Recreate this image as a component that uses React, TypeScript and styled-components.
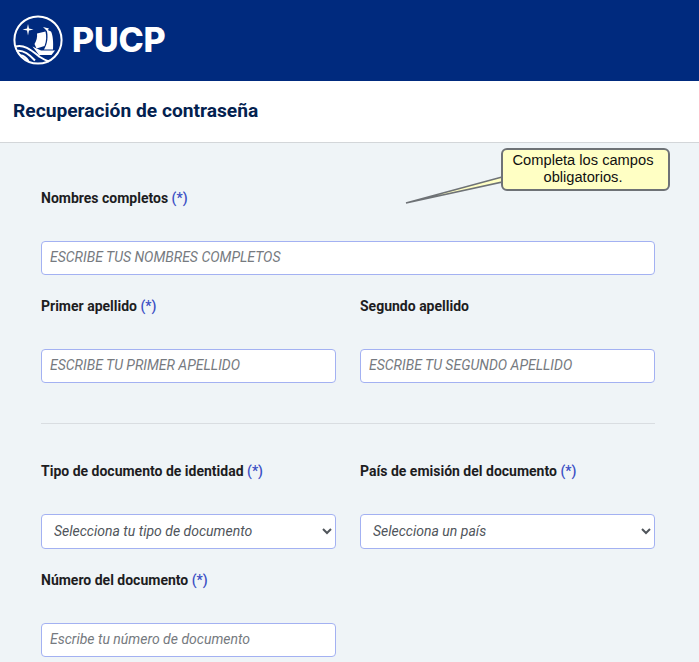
import React from 'react';
import styled, { createGlobalStyle } from 'styled-components';

const GlobalStyle = createGlobalStyle`
    html, body {
        margin: 0;
        padding: 0;
        background: #eff4f7;
        font-family: Roboto, "Liberation Sans", sans-serif;
    }
`;

const Page = styled.div`
    position: relative;
    min-height: 100vh;
    background: #eff4f7;
`;

const TopBar = styled.header`
    display: flex;
    align-items: center;
    height: 81px;
    padding-left: 13px;
    box-sizing: border-box;
    background: #002a7e;
`;

const Brand = styled.div`
    display: flex;
    align-items: center;
    gap: 9px;
    margin-top: -1px;
`;

const BrandName = styled.span`
    color: #fff;
    font-family: Inter, "Open Sans", sans-serif;
    font-size: 34px;
    font-weight: 800;
    letter-spacing: -0.2px;
    line-height: 1;
`;

const TitleBar = styled.div`
    display: flex;
    align-items: center;
    height: 62px;
    padding: 0 0 3px 13px;
    box-sizing: border-box;
    background: #fff;
    border-bottom: 1px solid #d3d6d9;

    h1 {
        margin: 0;
        color: #03214f;
        font-size: 19.2px;
        font-weight: 700;
    }
`;

const Form = styled.form`
    display: flex;
    flex-direction: column;
    padding: 45px 44px 5px 41px;
`;

const Row = styled.div`
    display: grid;
    grid-template-columns: 1fr 1fr;
    column-gap: 24px;
`;

const Field = styled.div<{ $wide?: boolean }>`
    display: flex;
    flex-direction: column;
    grid-column: ${props => (props.$wide ? '1 / -1' : 'auto')};
    margin-bottom: 21px;
`;

const Label = styled.label`
    height: 20px;
    margin-bottom: 33px;
    color: #1d1d1f;
    font-size: 14px;
    font-weight: 700;
    line-height: 20px;

    span {
        color: #3b4fc4;
        font-weight: 500;
    }
`;

const TextInput = styled.input`
    height: 34px;
    padding: 0 8px 2px;
    box-sizing: border-box;
    background: #fff;
    border: 1px solid #a3b1f2;
    border-radius: 4px;
    font-family: inherit;
    font-size: 14px;
    font-style: italic;
    outline: none;

    &::placeholder {
        color: #767a80;
        opacity: 1;
    }
`;

const Select = styled.select`
    height: 35px;
    padding: 0 8px 2px;
    box-sizing: border-box;
    background: #fff;
    border: 1px solid #a3b1f2;
    border-radius: 4px;
    color: #50555b;
    font-family: inherit;
    font-size: 14px;
    font-style: italic;
    outline: none;
`;

const Divider = styled.hr`
    width: 100%;
    height: 1px;
    margin: 19px 0 37px;
    background: #d9dde1;
    border: 0;
`;

const Hint = styled.div`
    position: absolute;
    top: 148px;
    left: 501px;
    width: 169px;
    height: 43px;
    box-sizing: border-box;
    padding: 2px 5px 0 0;
    background: #ffffc4;
    border: 2px solid #6e7276;
    border-radius: 6px;
    color: #111;
    font-family: "Liberation Sans", Arial, sans-serif;
    font-size: 14.67px;
    line-height: 17px;
    text-align: center;
`;

const HintTail = styled.svg`
    position: absolute;
    top: 170px;
    left: 400px;
`;

const Logo = () => (
    <svg width="50" height="50" viewBox="0 0 50 50" fill="none">
        <circle cx="25" cy="25" r="23.6" stroke="#fff" strokeWidth="2" />
        <path d="M15 9 L16 13.5 L20.5 14.5 L16 15.5 L15 20.5 L14 15.5 L9.5 14.5 L14 13.5 Z" fill="#fff" />
        <path d="M30 12 L36 13.5 L34 16 Z" fill="#fff" />
        <path
            d="M24 18.5 L32.5 16.5 C33.5 21 33.5 26 31.5 31 L23.5 33.5 L21.5 29 C23.5 26 24.5 22 24 18.5 Z"
            fill="#fff"
        />
        <path
            d="M33.5 14.5 L38 16.5 C40 20 40.5 28 40 34.5 L31 34.5 C34.5 29 35.5 21 33.5 14.5 Z"
            fill="#fff"
        />
        <path d="M19.5 31.5 L28 35.5 L42 35.5 L38.5 40 L26 40 Z" fill="#fff" />
        <path
            d="M2.5 31.5 C11 29 18 35 27 42 C30 44 33 45.5 36 46.5 M3.5 36 C10 34.5 16 39 22 45.5 M7 40.5 C10 40 13 42.5 15.5 46"
            stroke="#fff"
            strokeWidth="2"
        />
    </svg>
);

const Required = () => <span>(*)</span>;

const App: React.FC = () => {
    return (
        <Page>
            <GlobalStyle />
            <TopBar>
                <Brand>
                    <Logo />
                    <BrandName>PUCP</BrandName>
                </Brand>
            </TopBar>
            <TitleBar>
                <h1>Recuperación de contraseña</h1>
            </TitleBar>
            <Form>
                <Row>
                    <Field $wide>
                        <Label>Nombres completos <Required /></Label>
                        <TextInput placeholder="ESCRIBE TUS NOMBRES COMPLETOS" />
                    </Field>
                </Row>
                <Row>
                    <Field>
                        <Label>Primer apellido <Required /></Label>
                        <TextInput placeholder="ESCRIBE TU PRIMER APELLIDO" />
                    </Field>
                    <Field>
                        <Label>Segundo apellido</Label>
                        <TextInput placeholder="ESCRIBE TU SEGUNDO APELLIDO" />
                    </Field>
                </Row>
                <Divider />
                <Row>
                    <Field>
                        <Label>Tipo de documento de identidad <Required /></Label>
                        <Select defaultValue="">
                            <option value="">Selecciona tu tipo de documento</option>
                        </Select>
                    </Field>
                    <Field>
                        <Label>País de emisión del documento <Required /></Label>
                        <Select defaultValue="">
                            <option value="">Selecciona un país</option>
                        </Select>
                    </Field>
                </Row>
                <Row>
                    <Field>
                        <Label>Número del documento <Required /></Label>
                        <TextInput placeholder="Escribe tu número de documento" />
                    </Field>
                </Row>
            </Form>
            <HintTail width="104" height="36" viewBox="0 0 104 36">
                <path d="M6 33 L102 7 L102 12 Z" fill="#ffffc4" stroke="#6e7276" strokeWidth="1.6" />
            </HintTail>
            <Hint>Completa los campos obligatorios.</Hint>
        </Page>
    );
};

export default App;
